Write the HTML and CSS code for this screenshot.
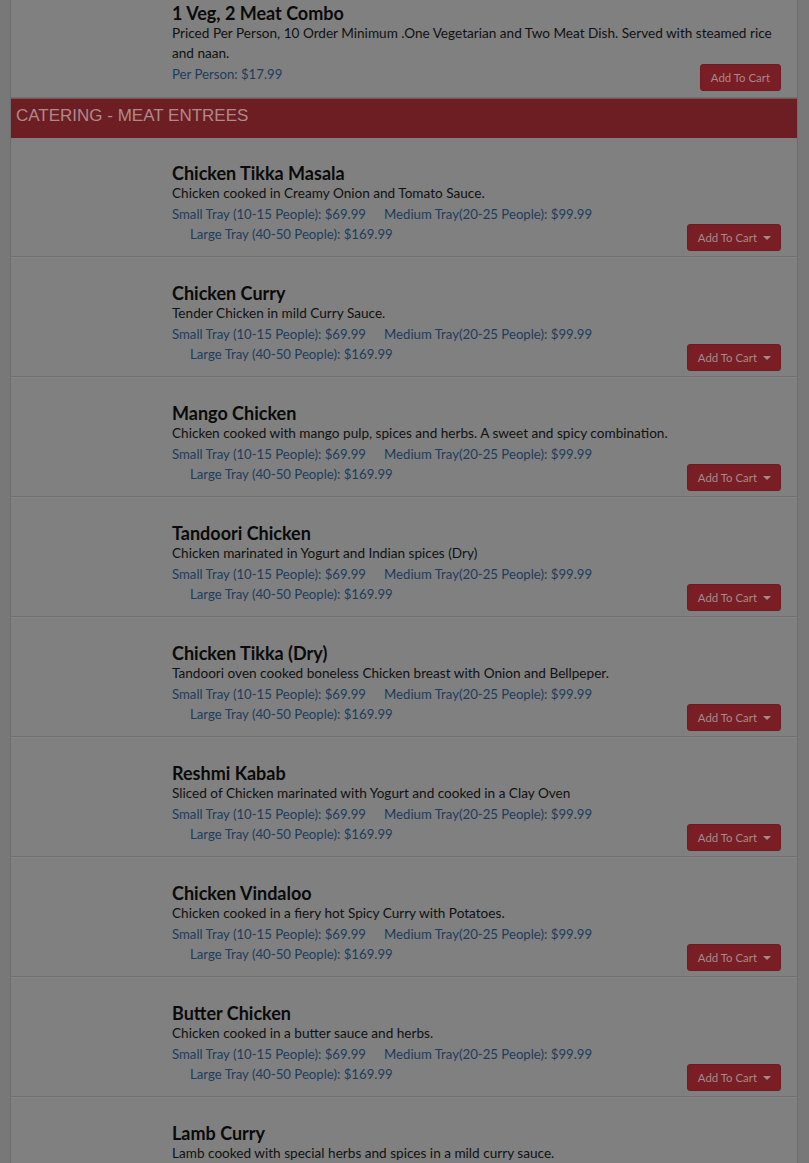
FILE: index.html
```html
<!DOCTYPE html>
<html>
<head>
<meta charset="utf-8">
<link rel="stylesheet" href="styles.css">
</head>
<body>
<div class="page">
  <div class="menu">
    <div class="item item-top">
      <div class="thumb"></div>
      <div class="info">
        <div class="name">1 Veg, 2 Meat Combo</div>
        <div class="desc">Priced Per Person, 10 Order Minimum .One Vegetarian and Two Meat Dish. Served with steamed rice and naan.</div>
        <div class="last">
          <div class="prices"><span class="price">Per Person: $17.99</span></div>
          <button class="cart plain">Add To Cart</button>
        </div>
      </div>
    </div>

    <div class="section">CATERING - MEAT ENTREES</div>

    <div class="item">
      <div class="thumb"></div>
      <div class="info">
        <div class="name">Chicken Tikka Masala</div>
        <div class="desc">Chicken cooked in Creamy Onion and Tomato Sauce.</div>
        <div class="prices"><span class="price">Small Tray (10-15 People): $69.99</span><span class="price">Medium Tray(20-25 People): $99.99</span></div>
        <div class="last">
          <div class="prices indent"><span class="price">Large Tray (40-50 People): $169.99</span></div>
          <button class="cart">Add To Cart <span class="caret"></span></button>
        </div>
      </div>
    </div>

    <div class="item">
      <div class="thumb"></div>
      <div class="info">
        <div class="name">Chicken Curry</div>
        <div class="desc">Tender Chicken in mild Curry Sauce.</div>
        <div class="prices"><span class="price">Small Tray (10-15 People): $69.99</span><span class="price">Medium Tray(20-25 People): $99.99</span></div>
        <div class="last">
          <div class="prices indent"><span class="price">Large Tray (40-50 People): $169.99</span></div>
          <button class="cart">Add To Cart <span class="caret"></span></button>
        </div>
      </div>
    </div>

    <div class="item">
      <div class="thumb"></div>
      <div class="info">
        <div class="name">Mango Chicken</div>
        <div class="desc">Chicken cooked with mango pulp, spices and herbs. A sweet and spicy combination.</div>
        <div class="prices"><span class="price">Small Tray (10-15 People): $69.99</span><span class="price">Medium Tray(20-25 People): $99.99</span></div>
        <div class="last">
          <div class="prices indent"><span class="price">Large Tray (40-50 People): $169.99</span></div>
          <button class="cart">Add To Cart <span class="caret"></span></button>
        </div>
      </div>
    </div>

    <div class="item">
      <div class="thumb"></div>
      <div class="info">
        <div class="name">Tandoori Chicken</div>
        <div class="desc">Chicken marinated in Yogurt and Indian spices (Dry)</div>
        <div class="prices"><span class="price">Small Tray (10-15 People): $69.99</span><span class="price">Medium Tray(20-25 People): $99.99</span></div>
        <div class="last">
          <div class="prices indent"><span class="price">Large Tray (40-50 People): $169.99</span></div>
          <button class="cart">Add To Cart <span class="caret"></span></button>
        </div>
      </div>
    </div>

    <div class="item">
      <div class="thumb"></div>
      <div class="info">
        <div class="name">Chicken Tikka (Dry)</div>
        <div class="desc">Tandoori oven cooked boneless Chicken breast with Onion and Bellpeper.</div>
        <div class="prices"><span class="price">Small Tray (10-15 People): $69.99</span><span class="price">Medium Tray(20-25 People): $99.99</span></div>
        <div class="last">
          <div class="prices indent"><span class="price">Large Tray (40-50 People): $169.99</span></div>
          <button class="cart">Add To Cart <span class="caret"></span></button>
        </div>
      </div>
    </div>

    <div class="item">
      <div class="thumb"></div>
      <div class="info">
        <div class="name">Reshmi Kabab</div>
        <div class="desc">Sliced of Chicken marinated with Yogurt and cooked in a Clay Oven</div>
        <div class="prices"><span class="price">Small Tray (10-15 People): $69.99</span><span class="price">Medium Tray(20-25 People): $99.99</span></div>
        <div class="last">
          <div class="prices indent"><span class="price">Large Tray (40-50 People): $169.99</span></div>
          <button class="cart">Add To Cart <span class="caret"></span></button>
        </div>
      </div>
    </div>

    <div class="item">
      <div class="thumb"></div>
      <div class="info">
        <div class="name">Chicken Vindaloo</div>
        <div class="desc">Chicken cooked in a fiery hot Spicy Curry with Potatoes.</div>
        <div class="prices"><span class="price">Small Tray (10-15 People): $69.99</span><span class="price">Medium Tray(20-25 People): $99.99</span></div>
        <div class="last">
          <div class="prices indent"><span class="price">Large Tray (40-50 People): $169.99</span></div>
          <button class="cart">Add To Cart <span class="caret"></span></button>
        </div>
      </div>
    </div>

    <div class="item">
      <div class="thumb"></div>
      <div class="info">
        <div class="name">Butter Chicken</div>
        <div class="desc">Chicken cooked in a butter sauce and herbs.</div>
        <div class="prices"><span class="price">Small Tray (10-15 People): $69.99</span><span class="price">Medium Tray(20-25 People): $99.99</span></div>
        <div class="last">
          <div class="prices indent"><span class="price">Large Tray (40-50 People): $169.99</span></div>
          <button class="cart">Add To Cart <span class="caret"></span></button>
        </div>
      </div>
    </div>

    <div class="item">
      <div class="thumb"></div>
      <div class="info">
        <div class="name">Lamb Curry</div>
        <div class="desc">Lamb cooked with special herbs and spices in a mild curry sauce.</div>
      </div>
    </div>
  </div>
</div>
</body>
</html>
```

FILE: styles.css
```css
html, body {
  margin: 0;
  padding: 0;
  background: #787878;
  height: 1163px;
  overflow: hidden;
}
body {
  font-family: Lato, "Open Sans", sans-serif;
  color: #0e0e0e;
}
.page {
  padding: 0 11px 0 10px;
}
.menu {
  background: #808080;
  border-left: 1px solid #6d6d6d;
  border-right: 1px solid #6d6d6d;
}
.item {
  display: flex;
  padding: 25px 16px 5px 0;
  border-bottom: 1px solid #707070;
  box-shadow: 0 1px 0 #868686;
  margin-bottom: 1px;
}
.item-top {
  padding-top: 3px;
  padding-bottom: 6px;
  margin-bottom: 0;
  box-shadow: none;
}
.thumb {
  width: 161px;
  flex: none;
}
.info {
  flex: 1;
  min-width: 0;
}
.name {
  font-size: 18px;
  font-weight: 700;
  line-height: 20px;
  color: #0a0a0a;
}
.desc {
  font-size: 13.6px;
  line-height: 20px;
  color: #111;
  padding-right: 4px;
}
.prices {
  display: flex;
  gap: 18px;
  font-size: 13.2px;
  line-height: 20px;
  color: #1c3d5d;
  margin-top: 1px;
}
.indent {
  padding-left: 18px;
  margin-top: 0;
}
.last {
  display: flex;
  justify-content: space-between;
  align-items: flex-start;
}
.item-top .last {
  margin-top: 1px;
}
.item-top .last .prices {
  margin-top: 0;
}
.cart {
  font-family: Lato, "Open Sans", sans-serif;
  font-size: 11.4px;
  line-height: 16px;
  background: #7a1e25;
  color: #a5898b;
  border: 1px solid #711b21;
  border-radius: 3px;
  padding: 0 9px 0 10px;
  height: 27px;
  display: flex;
  align-items: center;
  flex: none;
}
.cart.plain {
  padding: 0 10px;
}
.caret {
  display: inline-block;
  width: 0;
  height: 0;
  margin-left: 6px;
  border-top: 4px solid #a5898b;
  border-left: 4px solid transparent;
  border-right: 4px solid transparent;
}
.section {
  background: #6d1e23;
  color: #ae8a8c;
  font-family: "Liberation Sans", Arial, sans-serif;
  font-size: 17px;
  line-height: 20px;
  padding: 7px 5px 12px;
  border-top: 1px solid #7a5a4e;
}
```
